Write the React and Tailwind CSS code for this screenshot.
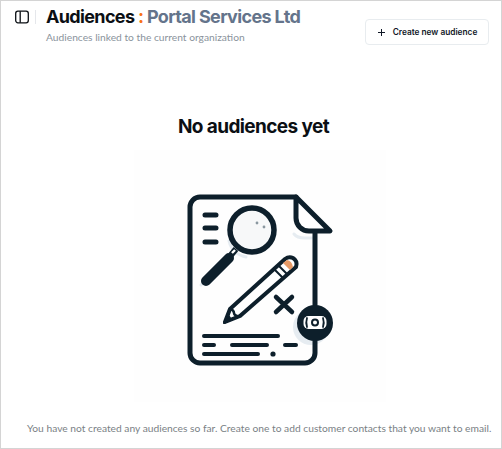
export default function App() {
  return (
    <div className="w-[502px] h-[449px] bg-white border border-[#d4d4d4] overflow-hidden flex flex-col font-['Inter',sans-serif]">
      <div className="flex items-start pl-[14px] pr-[12px] pt-[5px]">
        <div className="flex items-center h-[22px] pr-[6px]">
          <svg width="14" height="14" viewBox="0 0 14 14" fill="none" stroke="#0b0f14" strokeWidth="1.3">
            <rect x="0.7" y="1.2" width="12.6" height="11.6" rx="2.2" />
            <path d="M5.2 1.2v11.6" />
          </svg>
        </div>
        <div className="w-px h-[14px] mt-[4px] bg-[#e5e7eb]" />
        <div className="ml-[10px] flex-1">
          <h1 className="text-[18px] leading-[22px] font-bold tracking-[-0.65px] text-[#0b0f14] whitespace-nowrap">
            Audiences <span className="text-[#f97316]">:</span> <span className="text-[#64748b]">Portal Services Ltd</span>
          </h1>
          <p className="mt-[2px] text-[10.25px] leading-[14px] text-[#8a939c] font-['Lato',sans-serif]">Audiences linked to the current organization</p>
        </div>
        <button className="mt-[13px] w-[124px] h-[26px] flex items-center justify-center gap-[7px] rounded-[4px] border border-[#e8ecef] bg-white text-[8.3px] font-semibold text-[#111827]">
          <svg width="9" height="9" viewBox="0 0 9 9" stroke="#111827" strokeWidth="1">
            <path d="M4.5 1v7M1 4.5h7" />
          </svg>
          Create new audience
        </button>
      </div>

      <div className="flex-1 flex flex-col items-center">
        <h2 className="mt-[70px] ml-[5px] text-[19px] leading-[24px] font-bold tracking-[-0.6px] text-[#0b0f14]">No audiences yet</h2>
        <div className="mt-[11px] ml-[18px] w-[252px] h-[252px] bg-[#fefefe] flex items-center justify-center">
          <svg width="180" height="190" viewBox="0 0 180 190" fill="none" strokeLinecap="round" strokeLinejoin="round">
            {/* soft shadows */}
            <g stroke="#e6ecf1" strokeWidth="3">
              <path d="M124 53q3 4 11 4h10" />
              <path d="M31 104l28-28" />
              <path d="M59 60q3 13 17 16" />
            </g>
            <circle cx="141" cy="146" r="18" fill="#e6ecf1" />
            {/* page */}
            <path d="M126 16H30a10 10 0 0 0-10 10v146a10 10 0 0 0 10 10h105a10 10 0 0 0 10-10v-12M145 124V50" stroke="#0d1f2b" strokeWidth="5" />
            <path d="M126 16l34 34h-21a13 13 0 0 1-13-13z" fill="#fff" stroke="#0d1f2b" strokeWidth="5" />
            {/* text lines top */}
            <path d="M35 34h11M35 47h11M35 61h11" stroke="#0d1f2b" strokeWidth="5" />
            {/* magnifier */}
            <path d="M66 68l-5 6" stroke="#0d1f2b" strokeWidth="6" strokeLinecap="butt" />
            <path d="M65 69l-3 3" stroke="#fff" strokeWidth="2.400" strokeLinecap="butt" />
            <path d="M59 77l-23 23" stroke="#0d1f2b" strokeWidth="10" />
            <circle cx="82" cy="49" r="22" fill="#f7f8f9" stroke="#0d1f2b" strokeWidth="5.500" />
            <circle cx="87" cy="42" r="1.400" fill="#8a97a0" />
            <circle cx="94" cy="46" r="1.400" fill="#8a97a0" />
            {/* pencil */}
            <path d="M55 141l5-13 55-50q4-3 8-1 5 3 3 9l-56 49z" fill="#fff" stroke="#0d1f2b" strokeWidth="4" />
            <path d="M117 79q5 1 6 7l-3 3-7-7z" fill="#e69a66" />
            <path d="M109 85l8 8M105 89l8 8" stroke="#0d1f2b" strokeWidth="2" />
            <path d="M60 128q4 1 4 4 0 2 3 3" stroke="#0d1f2b" strokeWidth="2.500" />
            <path d="M54 142l6-5-2-3z" fill="#0d1f2b" stroke="#0d1f2b" strokeWidth="2" />
            {/* x */}
            <path d="M106 116l16 15M122 116l-16 15" stroke="#0d1f2b" strokeWidth="4.500" />
            {/* badge */}
            <circle cx="145" cy="142" r="18" fill="#0d1f2b" />
            <rect x="133.500" y="135" width="23" height="13" rx="5" fill="#fff" />
            <path d="M137 137q-1.500 4.500 0 9M153 137q1.500 4.500 0 9" stroke="#0d1f2b" strokeWidth="1.800" />
            <circle cx="145" cy="141.500" r="3" stroke="#0d1f2b" strokeWidth="2" />
            {/* text lines bottom */}
            <path d="M34 155h74M34 164h10M62 164h35M115 164h11M34 173h54" stroke="#0d1f2b" strokeWidth="4" />
            <circle cx="103" cy="173" r="2.600" fill="#0d1f2b" />
          </svg>
        </div>
        <p className="mt-[18px] ml-[26px] self-start text-[10.25px] leading-[16px] text-[#7a7f85] whitespace-nowrap font-['Lato',sans-serif]">
          You have not created any audiences so far. Create one to add customer contacts that you want to email.
        </p>
      </div>
    </div>
  )
}
